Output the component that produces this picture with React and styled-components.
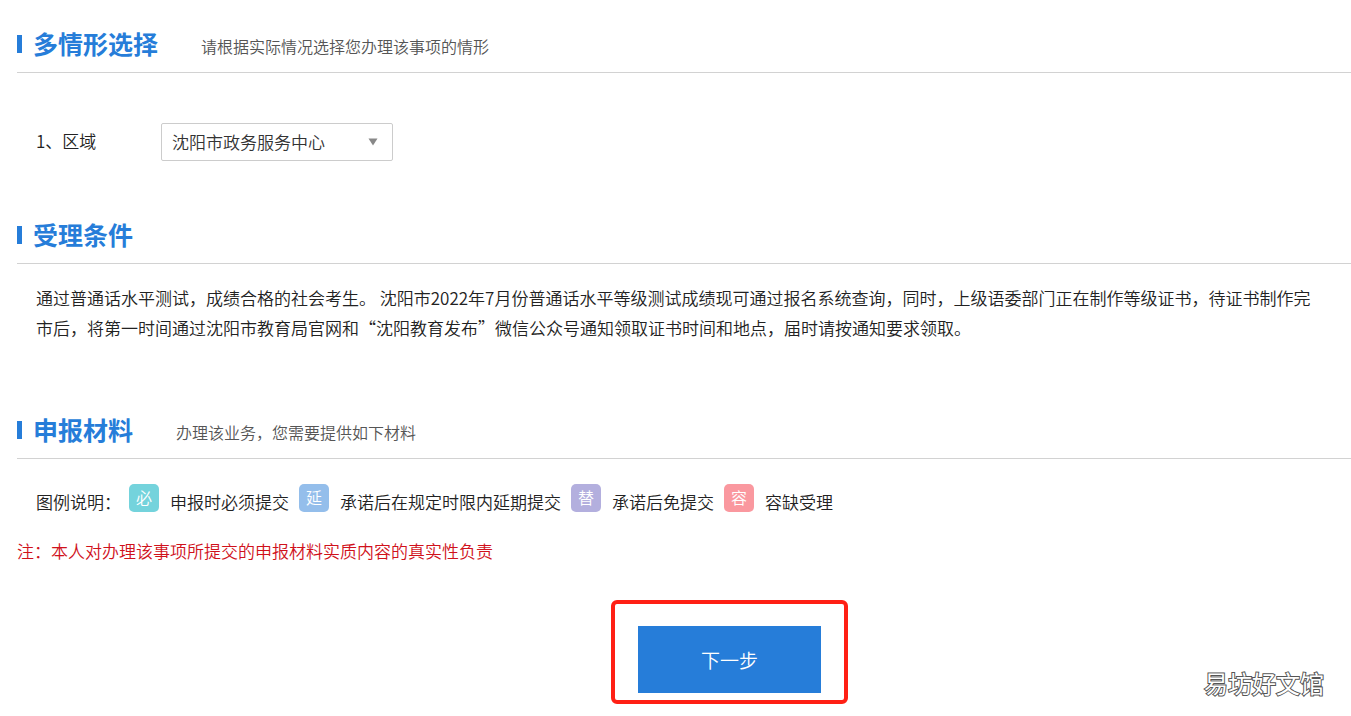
import React, { useState } from "react";
import styled, { createGlobalStyle } from "styled-components";

const GlobalStyle = createGlobalStyle`
  * {
    box-sizing: border-box;
  }

  body {
    margin: 0;
    background-color: #fff;
    color: #222;
    font-family: "Noto Sans CJK SC", "Liberation Sans", sans-serif;
    font-size: 17px;
    font-weight: 350;
    overflow-x: hidden;
  }
`;

const Page = styled.main`
  position: relative;
  padding: 24px 0 12px 17px;
  overflow: hidden;
`;

const SectionHead = styled.header`
  display: flex;
  align-items: center;
  height: 49px;
  padding-bottom: 8px;
  border-bottom: 1px solid #d2d2d2;

  &::before {
    content: "";
    width: 5px;
    height: 18px;
    margin-right: 11px;
    background-color: #267dd9;
  }
`;

const Title = styled.h2`
  margin: 0;
  padding-bottom: 2px;
  color: #267dd9;
  font-size: 25px;
  font-weight: 700;
  line-height: 38px;
`;

const Subtitle = styled.span`
  margin-left: 43px;
  padding-top: 4px;
  color: #555;
  font-size: 16px;
  line-height: 24px;
`;

const SectionBody = styled.div`
  padding: ${(props) => props.$padding};
`;

const Field = styled.div`
  display: flex;
  align-items: center;
`;

const FieldLabel = styled.label`
  width: 125px;
  padding-bottom: 3px;
`;

const SelectBox = styled.div`
  position: relative;
  width: 232px;

  svg {
    position: absolute;
    top: 15px;
    right: 15px;
    pointer-events: none;
  }
`;

const Select = styled.select`
  appearance: none;
  display: block;
  width: 100%;
  height: 38px;
  padding: 0 32px 2px 10px;
  border: 1px solid #ccc;
  border-radius: 2px;
  background-color: #fff;
  color: #333;
  font: inherit;
`;

const Condition = styled.p`
  margin: 0;
  line-height: 30px;
  white-space: nowrap;
`;

const Legend = styled.div`
  display: flex;
  align-items: flex-start;
  white-space: nowrap;
`;

const LegendLabel = styled.span`
  width: 93px;
  padding-top: 4px;
  line-height: 28px;
`;

const LegendItem = styled.div`
  display: flex;
  align-items: flex-start;
  margin-right: 10px;
`;

const LegendText = styled.span`
  padding-top: 4px;
  line-height: 28px;
`;

const Tag = styled.span`
  width: 30px;
  height: 28px;
  margin-right: 11px;
  border-radius: 5px;
  background-color: ${(props) => props.$color};
  color: #fff;
  font-size: 16px;
  line-height: 26px;
  text-align: center;
`;

const Note = styled.p`
  margin: 0;
  color: #d0111b;
  line-height: 30px;
`;

const Footer = styled.footer`
  display: flex;
  justify-content: center;
  padding: 34px 0 0 91px;
`;

const Highlight = styled.div`
  padding: 22px 23px 7px;
  border: 4px solid #ff2015;
  border-radius: 6px;
`;

const NextButton = styled.button`
  display: block;
  width: 183px;
  height: 67px;
  border: none;
  background-color: #267dd9;
  color: #fff;
  font: inherit;
  font-size: 19px;
  cursor: pointer;
`;

const Watermark = styled.div`
  position: absolute;
  right: 27px;
  bottom: 15px;
  color: #fff;
  font-size: 24px;
  font-weight: 400;
  line-height: 36px;
  paint-order: stroke fill;
  -webkit-text-stroke: 2px #555;
`;

const legends = [
  { tag: "必", color: "#74d3dc", text: "申报时必须提交" },
  { tag: "延", color: "#94beeb", text: "承诺后在规定时限内延期提交" },
  { tag: "替", color: "#b3afde", text: "承诺后免提交" },
  { tag: "容", color: "#fa989f", text: "容缺受理" },
];

const Section = ({ title, subtitle, padding, children }) => {
  return (
    <section>
      <SectionHead>
        <Title>{title}</Title>
        {subtitle && <Subtitle>{subtitle}</Subtitle>}
      </SectionHead>
      <SectionBody $padding={padding}>{children}</SectionBody>
    </section>
  );
};

const App = () => {
  const [area, setArea] = useState("center");

  return (
    <>
      <GlobalStyle />
      <Page>
        <Section
          title="多情形选择"
          subtitle="请根据实际情况选择您办理该事项的情形"
          padding="50px 0 54px 19px"
        >
          <Field>
            <FieldLabel htmlFor="area">1、区域</FieldLabel>
            <SelectBox>
              <Select
                id="area"
                value={area}
                onChange={(e) => setArea(e.target.value)}
              >
                <option value="center">沈阳市政务服务中心</option>
              </Select>
              <svg width="10" height="8" viewBox="0 0 10 8">
                <path d="M0.5 0.5h9L5 7.5z" fill="#888" />
              </svg>
            </SelectBox>
          </Field>
        </Section>

        <Section title="受理条件" padding="19px 0 67px 19px">
          <Condition>
            通过普通话水平测试，成绩合格的社会考生。
            {" 沈阳市2022年7月份普通话水平等级测试成绩现可通过报名系统查询，"}
            同时，上级语委部门正在制作等级证书，待证书制作完
            <br />
            市后，将第一时间通过沈阳市教育局官网和“沈阳教育发布”微信公众号通知领取证书时间和地点，届时请按通知要求领取。
          </Condition>
        </Section>

        <Section
          title="申报材料"
          subtitle="办理该业务，您需要提供如下材料"
          padding="25px 0 20px 19px"
        >
          <Legend>
            <LegendLabel>图例说明：</LegendLabel>
            {legends.map((item) => (
              <LegendItem key={item.tag}>
                <Tag $color={item.color}>{item.tag}</Tag>
                <LegendText>{item.text}</LegendText>
              </LegendItem>
            ))}
          </Legend>
        </Section>

        <Note>注：本人对办理该事项所提交的申报材料实质内容的真实性负责</Note>

        <Footer>
          <Highlight>
            <NextButton type="button">下一步</NextButton>
          </Highlight>
        </Footer>

        <Watermark>易坊好文馆</Watermark>
      </Page>
    </>
  );
};

export default App;
